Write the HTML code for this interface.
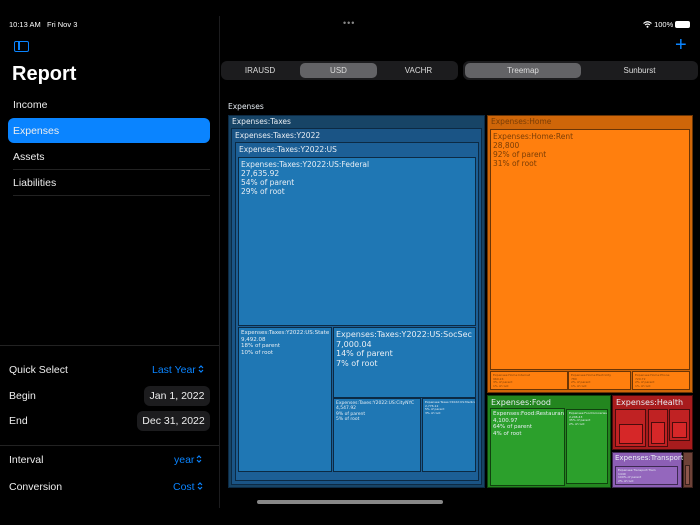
<!DOCTYPE html><html><head><style>
*{margin:0;padding:0;box-sizing:border-box}
body{width:700px;height:525px;background:#000;color:#fff;font-family:"Liberation Sans",sans-serif;position:relative;overflow:hidden}
.a{position:absolute}
.t{font-family:"DejaVu Sans",sans-serif;color:#e8eef4;line-height:1.2;white-space:nowrap;overflow:hidden}
.sep{position:absolute;height:1px;background:#222}
.seg{position:absolute;background:#1c1c1e;border-radius:6px;height:19px}
.seg span{position:absolute;top:0;height:19px;line-height:19px;font-size:8px;text-align:center;color:#ddd}
.sel{background:#636366;border-radius:5px;top:2px!important;height:15px!important;line-height:15px!important}
.row{position:absolute;left:9px;font-size:10.5px;color:#eee}
.blue{color:#0a84ff}
.pill{position:absolute;background:#1c1c1e;border-radius:6px;font-size:10.5px;color:#eee;text-align:center}
svg.c{vertical-align:-1px;margin-left:2px}
</style></head><body>
<div class="a" style="left:9px;top:20px;font-size:7.5px">10:13 AM&nbsp;&nbsp; Fri Nov 3</div>
<div class="a" style="left:14px;top:41px;width:15px;height:11px;border:1.5px solid #0a84ff;border-radius:2px"><div style="position:absolute;left:3px;top:0;width:1.5px;height:8px;background:#0a84ff"></div></div>
<div class="a" style="left:12px;top:63px;font-size:20px;font-weight:bold">Report</div>
<div class="row" style="left:13px;top:99px">Income</div>
<div class="a" style="left:8px;top:118px;width:202px;height:25px;background:#0a84ff;border-radius:6px"></div>
<div class="row" style="left:13px;top:125px">Expenses</div>
<div class="row" style="left:13px;top:151px">Assets</div>
<div class="sep" style="left:13px;top:169px;width:197px"></div>
<div class="row" style="left:13px;top:177px">Liabilities</div>
<div class="sep" style="left:13px;top:195px;width:197px"></div>
<div class="sep" style="left:0;top:345px;width:219px"></div>
<div class="row" style="top:364px">Quick Select</div>
<div class="a blue" style="left:152px;top:364px;font-size:10.5px">Last Year<svg class="c" width="6" height="10" viewBox="0 0 6 10"><path d="M1 4L3 2L5 4M1 6L3 8L5 6" fill="none" stroke="#0a84ff" stroke-width="1.2"/></svg></div>
<div class="row" style="top:390px">Begin</div>
<div class="pill" style="left:144px;top:386px;width:66px;height:20px;line-height:20px">Jan 1, 2022</div>
<div class="row" style="top:415px">End</div>
<div class="pill" style="left:137px;top:411px;width:73px;height:20px;line-height:20px">Dec 31, 2022</div>
<div class="sep" style="left:0;top:445px;width:219px"></div>
<div class="row" style="top:454px">Interval</div>
<div class="a blue" style="left:174px;top:454px;font-size:10.5px">year<svg class="c" width="6" height="10" viewBox="0 0 6 10"><path d="M1 4L3 2L5 4M1 6L3 8L5 6" fill="none" stroke="#0a84ff" stroke-width="1.2"/></svg></div>
<div class="row" style="top:481px">Conversion</div>
<div class="a blue" style="left:173px;top:481px;font-size:10.5px">Cost<svg class="c" width="6" height="10" viewBox="0 0 6 10"><path d="M1 4L3 2L5 4M1 6L3 8L5 6" fill="none" stroke="#0a84ff" stroke-width="1.2"/></svg></div>
<div class="a" style="left:219px;top:16px;width:1px;height:492px;background:#1c1c1e"></div>
<div class="a" style="left:343px;top:18px;font-size:9px;color:#888;letter-spacing:1px">•••</div>
<div class="a" style="left:643px;top:20px;font-size:7.5px"><svg width="9" height="7" viewBox="0 0 9 7" style="vertical-align:-1px"><path d="M0.5 2.5Q4.5 -1 8.5 2.5M2 4Q4.5 2 7 4" fill="none" stroke="#fff" stroke-width="1.1"/><circle cx="4.5" cy="5.8" r="1" fill="#fff"/></svg> 100% <span style="display:inline-block;width:15px;height:7px;background:#fff;border-radius:2px;vertical-align:-1px"></span></div>
<div class="a blue" style="left:675px;top:34px;font-size:20px;font-weight:200">+</div>
<div class="seg" style="left:221px;top:61px;width:237px"><span style="left:0;width:78px">IRAUSD</span><span class="sel" style="left:79px;width:77px">USD</span><span style="left:158px;width:79px">VACHR</span></div>
<div class="seg" style="left:463px;top:61px;width:235px"><span class="sel" style="left:2px;width:116px">Treemap</span><span style="left:118px;width:117px">Sunburst</span></div>
<div class="a t" style="left:228px;top:102px;font-size:7.5px">Expenses</div>
<div class="a" style="left:228px;top:115px;width:257px;height:373px;background:#174466;border:1px solid #0c2a44"></div>
<div class="a t" style="left:232px;top:117px;font-size:7.5px">Expenses:Taxes</div>
<div class="a" style="left:231px;top:128px;width:251px;height:357px;background:#1a5485;border:1px solid #0c2a44"></div>
<div class="a t" style="left:235px;top:131px;font-size:7.5px">Expenses:Taxes:Y2022</div>
<div class="a" style="left:235px;top:142px;width:244px;height:339px;background:#1c5f96;border:1px solid #0c2a44"></div>
<div class="a t" style="left:239px;top:145px;font-size:7.5px">Expenses:Taxes:Y2022:US</div>
<div class="a t" style="left:238px;top:157px;width:238px;height:169px;background:#1f77b4;border:1px solid #0c2a44;font-size:7.5px;padding:2px">Expenses:Taxes:Y2022:US:Federal<br>27,635.92<br>54% of parent<br>29% of root</div>
<div class="a t" style="left:238px;top:327px;width:94px;height:145px;background:#1f77b4;border:1px solid #0c2a44;font-size:5.5px;padding:2px">Expenses:Taxes:Y2022:US:State<br>9,492.08<br>18% of parent<br>10% of root</div>
<div class="a t" style="left:333px;top:327px;width:143px;height:71px;background:#1f77b4;border:1px solid #0c2a44;font-size:8px;padding:2px">Expenses:Taxes:Y2022:US:SocSec<br>7,000.04<br>14% of parent<br>7% of root</div>
<div class="a t" style="left:333px;top:398px;width:88px;height:74px;background:#1f77b4;border:1px solid #0c2a44;font-size:4.5px;padding:2px">Expenses:Taxes:Y2022:US:CityNYC<br>4,547.92<br>9% of parent<br>5% of root</div>
<div class="a t" style="left:422px;top:398px;width:54px;height:74px;background:#1f77b4;border:1px solid #0c2a44;font-size:3px;padding:2px">Expenses:Taxes:Y2022:US:Medicare<br>2,776.12<br>5% of parent<br>3% of root</div>
<div class="a" style="left:487px;top:115px;width:206px;height:278px;background:#cf6609;border:1px solid #6b3505"></div>
<div class="a t" style="left:491px;top:117px;font-size:7.5px;color:#7a3d06">Expenses:Home</div>
<div class="a t" style="left:490px;top:129px;width:200px;height:241px;background:#ff7f0e;border:1px solid #6b3505;font-size:7.5px;padding:2px;color:#7a3d06">Expenses:Home:Rent<br>28,800<br>92% of parent<br>31% of root</div>
<div class="a t" style="left:490px;top:371px;width:78px;height:19px;background:#ff7f0e;border:1px solid #6b3505;font-size:3px;padding:2px;color:#7a3d06">Expenses:Home:Internet<br>960.24<br>3% of parent<br>1% of root</div>
<div class="a t" style="left:568px;top:371px;width:63px;height:19px;background:#ff7f0e;border:1px solid #6b3505;font-size:3px;padding:2px;color:#7a3d06">Expenses:Home:Electricity<br>780<br>2% of parent<br>1% of root</div>
<div class="a t" style="left:632px;top:371px;width:58px;height:19px;background:#ff7f0e;border:1px solid #6b3505;font-size:3px;padding:2px;color:#7a3d06">Expenses:Home:Phone<br>720.72<br>2% of parent<br>1% of root</div>
<div class="a" style="left:487px;top:395px;width:124px;height:93px;background:#23861f;border:1px solid #10420e"></div>
<div class="a t" style="left:491px;top:398px;font-size:8px">Expenses:Food</div>
<div class="a t" style="left:490px;top:408px;width:75px;height:78px;background:#2ca02c;border:1px solid #10420e;font-size:5.5px;padding:2px">Expenses:Food:Restaurant<br>4,100.97<br>64% of parent<br>4% of root</div>
<div class="a t" style="left:566px;top:409px;width:42px;height:75px;background:#2ca02c;border:1px solid #10420e;font-size:3px;padding:2px">Expenses:Food:Groceries<br>2,246.43<br>35% of parent<br>2% of root</div>
<div class="a" style="left:612px;top:395px;width:81px;height:55px;background:#a81c1d;border:1px solid #4a0c0c"></div>
<div class="a t" style="left:616px;top:398px;font-size:8px">Expenses:Health</div>
<div class="a" style="left:615px;top:409px;width:31px;height:38px;background:#c02223;border:1px solid #4a0c0c"></div>
<div class="a" style="left:619px;top:424px;width:24px;height:20px;background:#d62728;border:1px solid #4a0c0c"></div>
<div class="a" style="left:648px;top:409px;width:20px;height:38px;background:#c02223;border:1px solid #4a0c0c"></div>
<div class="a" style="left:651px;top:422px;width:14px;height:22px;background:#d62728;border:1px solid #4a0c0c"></div>
<div class="a" style="left:669px;top:409px;width:21px;height:32px;background:#c02223;border:1px solid #4a0c0c"></div>
<div class="a" style="left:672px;top:422px;width:15px;height:16px;background:#d62728;border:1px solid #4a0c0c"></div>
<div class="a" style="left:612px;top:452px;width:70px;height:36px;background:#8c5fb5;border:1px solid #3e2a52"></div>
<div class="a t" style="left:615px;top:454px;font-size:7px">Expenses:Transport</div>
<div class="a t" style="left:615px;top:466px;width:63px;height:19px;background:#9467bd;border:1px solid #3e2a52;font-size:3px;padding:2px">Expenses:Transport:Train<br>1440<br>100% of parent<br>2% of root</div>
<div class="a" style="left:683px;top:452px;width:10px;height:36px;background:#6e4238;border:1px solid #3a221c"></div>
<div class="a" style="left:685px;top:465px;width:5px;height:20px;background:#8c564b;border:1px solid #3a221c"></div>
<div class="a" style="left:257px;top:500px;width:186px;height:4px;background:#888;border-radius:2px"></div>
</body></html>
